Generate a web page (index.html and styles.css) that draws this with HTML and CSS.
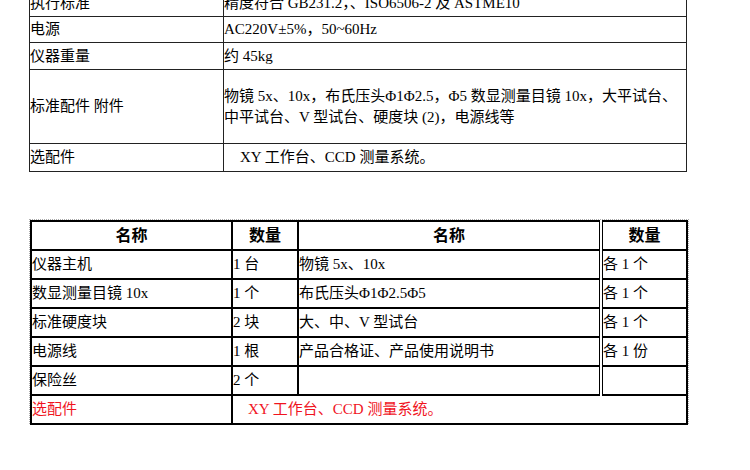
FILE: index.html
```html
<!DOCTYPE html>
<html lang="zh">
<head>
<meta charset="utf-8">
<link rel="stylesheet" href="styles.css">
</head>
<body>
<div class="page">
  <table class="spec">
    <colgroup><col class="c1"><col class="c2"></colgroup>
    <tr class="r26"><td>执行标准</td><td>精度符合 GB231.2，、ISO6506-2 及 ASTME10</td></tr>
    <tr class="r26"><td>电源</td><td>AC220V±5%，50~60Hz</td></tr>
    <tr class="r27"><td>仪器重量</td><td>约 45kg</td></tr>
    <tr class="r74"><td>标准配件 附件</td><td>物镜 5x、10x，布氏压头Φ1Φ2.5，Φ5 数显测量目镜 10x，大平试台、中平试台、V 型试台、硬度块 (2)，电源线等</td></tr>
    <tr class="r28"><td>选配件</td><td><span class="indent">XY 工作台、CCD 测量系统。</span></td></tr>
  </table>

  <table class="list">
    <colgroup><col class="k1"><col class="k2"><col class="k3"><col class="k4"></colgroup>
    <tr><th>名称</th><th>数量</th><th>名称</th><th class="dbl">数量</th></tr>
    <tr><td>仪器主机</td><td>1 台</td><td>物镜 5x、10x</td><td class="dbl">各 1 个</td></tr>
    <tr><td>数显测量目镜 10x</td><td>1 个</td><td>布氏压头Φ1Φ2.5Φ5</td><td class="dbl">各 1 个</td></tr>
    <tr><td>标准硬度块</td><td>2 块</td><td>大、中、V 型试台</td><td class="dbl">各 1 个</td></tr>
    <tr><td>电源线</td><td>1 根</td><td>产品合格证、产品使用说明书</td><td class="dbl">各 1 份</td></tr>
    <tr><td>保险丝</td><td>2 个</td><td></td><td class="dbl"></td></tr>
    <tr class="red"><td>选配件</td><td colspan="3"><span class="indent2">XY 工作台、CCD 测量系统。</span></td></tr>
  </table>
</div>
</body>
</html>
```

FILE: styles.css
```css
html, body {
  margin: 0;
  padding: 0;
  background: #fff;
}
.page {
  padding-left: 29px;
  margin-top: -10px;
  font-family: "Liberation Serif", "Noto Sans CJK SC", serif;
  font-size: 15px;
  color: #000;
}
table {
  table-layout: fixed;
  border-collapse: collapse;
}
td, th {
  padding: 0;
  vertical-align: middle;
  text-align: left;
  line-height: 21px;
}
.spec {
  width: 658px;
}
.spec .c1 { width: 194px; }
.spec td {
  border: 1px solid #222;
}
.spec .r26 td { height: 25px; }
.spec .r27 td { height: 26px; }
.spec .r74 td { height: 73px; }
.spec .r28 td { height: 27px; }
.indent { padding-left: 16px; }

.list {
  margin-top: 48px;
  margin-left: 1px;
  width: 656px;
  outline: 1px dotted #aaa;
  outline-offset: 0;
}
.list .k1 { width: 201px; }
.list .k2 { width: 66px; }
.list .k3 { width: 303px; }
.list .k4 { width: 86px; }
.list td, .list th {
  border: 2px solid #000;
  height: 27px;
}
.list th {
  text-align: center;
  font-weight: bold;
  font-size: 16px;
}
.list .dbl {
  border-left: 4px double #000;
}
.list .red td {
  color: #f0141e;
}
.indent2 { padding-left: 15px; }
```
